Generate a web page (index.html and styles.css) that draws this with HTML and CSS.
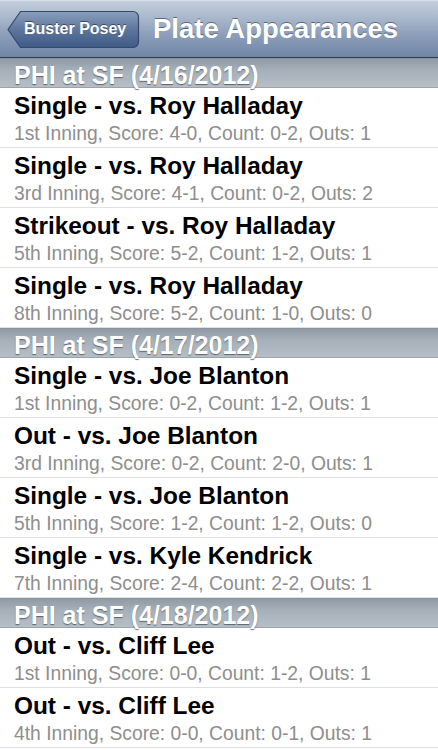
FILE: index.html
```html
<!DOCTYPE html>
<html>
<head>
<meta charset="utf-8">
<link rel="stylesheet" href="styles.css">
</head>
<body>
<div class="screen">
  <header class="navbar">
    <div class="back">
      <svg class="back-shape" width="133" height="39" viewBox="0 0 133 39">
        <defs>
          <linearGradient id="bg" x1="0" y1="0" x2="0" y2="1">
            <stop offset="0" stop-color="#8a9fbd"/>
            <stop offset="0.5" stop-color="#5d769c"/>
            <stop offset="1" stop-color="#3e5a86"/>
          </linearGradient>
        </defs>
        <path d="M1 19.5 L13.5 1.5 H126 A5.5 5.5 0 0 1 131.5 7 V32 A5.5 5.5 0 0 1 126 37.5 H13.5 Z" fill="url(#bg)" stroke="#34496b" stroke-width="1.2"/>
      </svg>
      <span class="back-label">Buster Posey</span>
    </div>
    <h1 class="title">Plate Appearances</h1>
  </header>

  <section class="group">
    <div class="group-head">PHI at SF (4/16/2012)</div>
    <div class="row"><div class="row-title">Single - vs. Roy Halladay</div><div class="row-sub">1st Inning, Score: 4-0, Count: 0-2, Outs: 1</div></div>
    <div class="row"><div class="row-title">Single - vs. Roy Halladay</div><div class="row-sub">3rd Inning, Score: 4-1, Count: 0-2, Outs: 2</div></div>
    <div class="row"><div class="row-title">Strikeout - vs. Roy Halladay</div><div class="row-sub">5th Inning, Score: 5-2, Count: 1-2, Outs: 1</div></div>
    <div class="row"><div class="row-title">Single - vs. Roy Halladay</div><div class="row-sub">8th Inning, Score: 5-2, Count: 1-0, Outs: 0</div></div>
  </section>

  <section class="group">
    <div class="group-head">PHI at SF (4/17/2012)</div>
    <div class="row"><div class="row-title">Single - vs. Joe Blanton</div><div class="row-sub">1st Inning, Score: 0-2, Count: 1-2, Outs: 1</div></div>
    <div class="row"><div class="row-title">Out - vs. Joe Blanton</div><div class="row-sub">3rd Inning, Score: 0-2, Count: 2-0, Outs: 1</div></div>
    <div class="row"><div class="row-title">Single - vs. Joe Blanton</div><div class="row-sub">5th Inning, Score: 1-2, Count: 1-2, Outs: 0</div></div>
    <div class="row"><div class="row-title">Single - vs. Kyle Kendrick</div><div class="row-sub">7th Inning, Score: 2-4, Count: 2-2, Outs: 1</div></div>
  </section>

  <section class="group">
    <div class="group-head">PHI at SF (4/18/2012)</div>
    <div class="row"><div class="row-title">Out - vs. Cliff Lee</div><div class="row-sub">1st Inning, Score: 0-0, Count: 1-2, Outs: 1</div></div>
    <div class="row"><div class="row-title">Out - vs. Cliff Lee</div><div class="row-sub">4th Inning, Score: 0-0, Count: 0-1, Outs: 1</div></div>
  </section>
</div>
</body>
</html>
```

FILE: styles.css
```css
html, body {
  margin: 0;
  padding: 0;
  background: #ffffff;
}
body {
  font-family: "Liberation Sans", Arial, sans-serif;
  width: 438px;
  height: 750px;
  overflow: hidden;
}
.screen {
  display: flex;
  flex-direction: column;
}
.navbar {
  height: 58px;
  box-sizing: border-box;
  display: flex;
  align-items: center;
  padding-left: 7px;
  gap: 13px;
  background: linear-gradient(to bottom, #c3cedc 0%, #a9b8cc 30%, #8c9eb9 60%, #6f87a7 100%);
  border-top: 1px solid #d8dfe8;
  border-bottom: 1px solid #2e3b4f;
}
.back {
  position: relative;
  width: 133px;
  height: 39px;
  display: flex;
  align-items: center;
  padding-left: 17px;
  box-sizing: border-box;
  flex-shrink: 0;
}
.back-shape {
  position: absolute;
  left: 0;
  top: 0;
}
.back-label {
  position: relative;
  color: #ffffff;
  font-weight: bold;
  font-size: 16px;
  text-shadow: 0 -1px 0 rgba(0, 0, 0, 0.45);
}
.title {
  margin: 0;
  color: #ffffff;
  font-size: 27.5px;
  font-weight: bold;
  text-shadow: 0 -1px 0 rgba(40, 50, 70, 0.6);
}
.group-head {
  height: 30px;
  box-sizing: border-box;
  padding: 3px 0 0 14px;
  color: #ffffff;
  font-weight: bold;
  font-size: 25px;
  line-height: 26px;
  text-shadow: 0 1px 1px rgba(60, 70, 80, 0.75);
  background: linear-gradient(to bottom, #909ba6 0%, #a6b0ba 40%, #b6bec6 100%);
  border-top: 1px solid #8a949e;
  border-bottom: 1px solid #9aa2aa;
}
.row {
  height: 60px;
  box-sizing: border-box;
  padding: 4px 14px 0;
  border-bottom: 1px solid #e0e0e0;
  display: flex;
  flex-direction: column;
}
.row-title {
  color: #000000;
  font-weight: bold;
  font-size: 24.4px;
  line-height: 28px;
  white-space: nowrap;
}
.row-sub {
  color: #8e8e8e;
  font-size: 19.3px;
  line-height: 22px;
  margin-top: 3px;
  white-space: nowrap;
}
```
